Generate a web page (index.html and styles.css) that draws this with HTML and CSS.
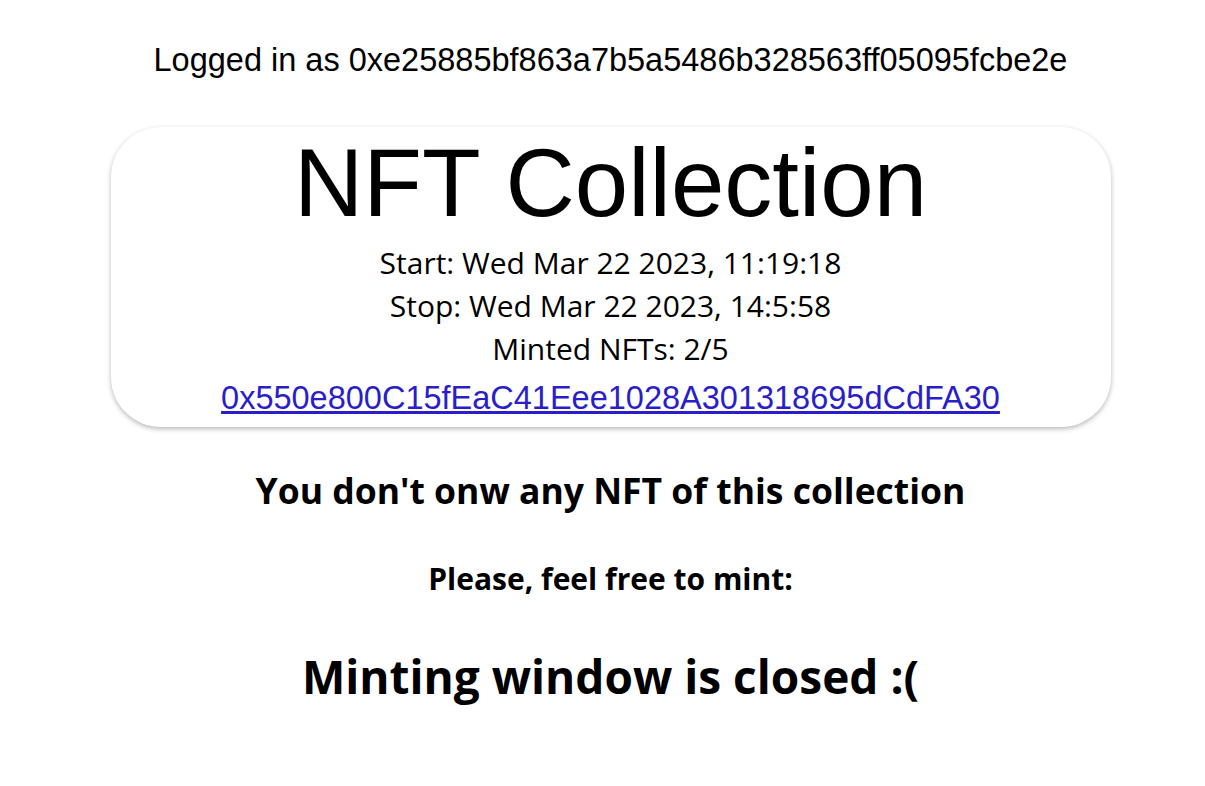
FILE: index.html
```html
<!DOCTYPE html>
<html lang="en">
<head>
<meta charset="utf-8">
<title>NFT Collection</title>
<link rel="stylesheet" href="styles.css">
</head>
<body>
<main class="app">
  <p class="login">Logged in as 0xe25885bf863a7b5a5486b328563ff05095fcbe2e</p>
  <section class="card">
    <h1 class="title">NFT Collection</h1>
    <div class="info">Start: Wed Mar 22 2023, 11:19:18</div>
    <div class="info">Stop: Wed Mar 22 2023, 14:5:58</div>
    <div class="info">Minted NFTs: 2/5</div>
    <a class="address" href="#">0x550e800C15fEaC41Eee1028A301318695dCdFA30</a>
  </section>
  <h2 class="owned">You don't onw any NFT of this collection</h2>
  <h3 class="invite">Please, feel free to mint:</h3>
  <h1 class="closed">Minting window is closed :(</h1>
</main>
</body>
</html>
```
FILE: styles.css
```css
html, body {
  background: #ffffff;
}
body {
  margin: 0 0 0 16px;
  color: #000;
  font-family: "Liberation Sans", Arial, sans-serif;
}
.app {
  display: flex;
  flex-direction: column;
  align-items: center;
  text-align: center;
  padding-top: 40px;
}
.login {
  margin: 0;
  font-size: 32.5px;
  line-height: 40px;
}
.card {
  width: 1000px;
  box-sizing: border-box;
  margin-top: 47px;
  padding: 6px 0 9px;
  border-radius: 50px;
  background: #fff;
  box-shadow: 0 2px 5px rgba(0, 0, 0, 0.28);
  display: flex;
  flex-direction: column;
  align-items: center;
}
.title {
  margin: 0 0 8px;
  font-size: 96px;
  font-weight: 400;
  line-height: 100px;
}
.info {
  font-family: "Open Sans", "Noto Sans", sans-serif;
  font-size: 30px;
  line-height: 43px;
}
.address {
  margin-top: 8px;
  font-size: 32.5px;
  line-height: 40px;
  color: #2a1ecb;
  text-decoration: underline;
}
.owned, .invite, .closed {
  font-family: "Open Sans", "Noto Sans", sans-serif;
  font-weight: 700;
  margin: 0;
}
.owned {
  margin-top: 39px;
  font-size: 35.5px;
  line-height: 48px;
}
.invite {
  margin-top: 45px;
  font-size: 30px;
  line-height: 40px;
}
.closed {
  margin-top: 47px;
  font-size: 46px;
  line-height: 60px;
}
```
